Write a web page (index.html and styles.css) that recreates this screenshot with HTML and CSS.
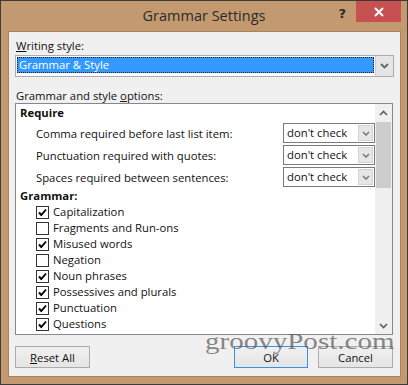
FILE: index.html
```html
<!DOCTYPE html>
<html lang="en">
<head>
  <meta charset="UTF-8" />
  <title>Grammar Settings</title>
  <link rel="stylesheet" href="styles.css">
</head>
<body>
  <div class="window">
    <div class="titlebar">
      <div></div>
      <div class="title">Grammar Settings</div>
      <div class="controls">
        <span class="help">?</span>
        <span class="close">
          <svg width="10" height="10" viewBox="0 0 10 10"><path d="M1 1L9 9M9 1L1 9" stroke="#fff" stroke-width="2"/></svg>
        </span>
      </div>
    </div>

    <div class="content">
      <div class="label label-style"><u>W</u>riting style:</div>
      <div class="select">
        <div class="select-value"><span>Grammar &amp; Style</span></div>
        <div class="select-btn">
          <svg width="9" height="6" viewBox="0 0 9 6"><path d="M1 1L4.5 4.5L8 1" fill="none" stroke="#666" stroke-width="1.8"/></svg>
        </div>
      </div>

      <div class="label label-options">Grammar and style <u>o</u>ptions:</div>
      <div class="listbox">
        <div class="items">
          <div class="group">Require</div>
          <div class="combo-row">
            <span>Comma required before last list item:</span>
            <div class="combo"><span class="combo-text">don't check</span><span class="combo-btn"><svg width="8" height="5" viewBox="0 0 8 5"><path d="M1 1L4 4L7 1" fill="none" stroke="#777" stroke-width="1.5"/></svg></span></div>
          </div>
          <div class="combo-row">
            <span>Punctuation required with quotes:</span>
            <div class="combo"><span class="combo-text">don't check</span><span class="combo-btn"><svg width="8" height="5" viewBox="0 0 8 5"><path d="M1 1L4 4L7 1" fill="none" stroke="#777" stroke-width="1.5"/></svg></span></div>
          </div>
          <div class="combo-row">
            <span>Spaces required between sentences:</span>
            <div class="combo"><span class="combo-text">don't check</span><span class="combo-btn"><svg width="8" height="5" viewBox="0 0 8 5"><path d="M1 1L4 4L7 1" fill="none" stroke="#777" stroke-width="1.5"/></svg></span></div>
          </div>
          <div class="group group-grammar">Grammar:</div>
          <div class="check-row"><span class="check on"></span>Capitalization</div>
          <div class="check-row"><span class="check"></span>Fragments and Run-ons</div>
          <div class="check-row"><span class="check on"></span>Misused words</div>
          <div class="check-row"><span class="check"></span>Negation</div>
          <div class="check-row"><span class="check on"></span>Noun phrases</div>
          <div class="check-row"><span class="check on"></span>Possessives and plurals</div>
          <div class="check-row"><span class="check on"></span>Punctuation</div>
          <div class="check-row"><span class="check on"></span>Questions</div>
          <div class="check-row"><span class="check on"></span></div>
        </div>
        <div class="scrollbar">
          <div class="scroll-arrow">
            <svg width="9" height="6" viewBox="0 0 9 6"><path d="M1 5L4.5 1.5L8 5" fill="none" stroke="#606060" stroke-width="1.6"/></svg>
          </div>
          <div class="scroll-track"><div class="scroll-thumb"></div></div>
          <div class="scroll-arrow">
            <svg width="9" height="6" viewBox="0 0 9 6"><path d="M1 1L4.5 4.5L8 1" fill="none" stroke="#606060" stroke-width="1.6"/></svg>
          </div>
        </div>
      </div>

      <div class="buttons">
        <button class="btn"><u>R</u>eset All</button>
        <div class="spacer"></div>
        <button class="btn btn-default">OK</button>
        <button class="btn">Cancel</button>
      </div>

      <div class="watermark">groovyPost.com</div>
    </div>
  </div>
</body>
</html>
```

FILE: styles.css
```css
body { margin: 0; background: #fff; font-family: "Open Sans", "Noto Sans", sans-serif; }

.window {
  position: relative;
  width: 408px;
  height: 385px;
  box-sizing: border-box;
  border: 1px solid #3b3b3b;
  background: #c39a6f;
  padding: 0 6px 7px 7px;
  display: flex;
  flex-direction: column;
}

.titlebar {
  height: 30px;
  display: grid;
  grid-template-columns: 73px 1fr 73px;
  margin: 0 -6px 0 -7px;
}

.title {
  text-align: center;
  font-size: 14.5px;
  line-height: 30px;
  color: #2b2b2b;
}

.controls {
  display: flex;
  justify-content: flex-end;
  align-items: flex-start;
  padding-right: 6px;
}

.help {
  font-family: "DejaVu Sans", sans-serif;
  font-weight: bold;
  font-size: 13px;
  color: #2a2a2a;
  line-height: 14px;
  margin-top: 6px;
  margin-right: 10px;
}

.close {
  width: 45px;
  height: 21px;
  background: #c75050;
  display: flex;
  align-items: center;
  justify-content: center;
}

.content {
  flex: 1;
  position: relative;
  background: #f0f0f0;
  border: 1px solid #a9835d;
  padding: 0 6px 0 6px;
  font-size: 11.3px;
  color: #111;
  overflow: hidden;
}

.label {
  height: 16px;
  line-height: 16px;
  padding-left: 1px;
}

.label-style { margin-top: 6px; }
.label-options { margin-top: 11px; }

.select {
  margin-top: 1px;
  width: 379px;
  height: 22px;
  box-sizing: border-box;
  border: 1px solid #acacac;
  background: #fff;
  display: flex;
}

.select-value {
  flex: 1;
  padding: 1px;
}

.select-value span {
  display: block;
  height: 16px;
  line-height: 16px;
  background: #3399ff;
  color: #fff;
  outline: 1px dotted #222;
  outline-offset: -1px;
  padding-left: 2px;
}

.select-btn {
  width: 17px;
  background: #e5e5e5;
  border-left: 1px solid #d0d0d0;
  display: flex;
  align-items: center;
  justify-content: center;
}

.listbox {
  margin-top: -1px;
  width: 378px;
  height: 232px;
  box-sizing: border-box;
  border: 1px solid #828790;
  background: #fff;
  display: flex;
}

.items {
  flex: 1;
  overflow: hidden;
}

.group {
  font-weight: bold;
  padding-left: 4px;
  height: 18px;
  line-height: 18px;
}

.group-grammar {
  height: 16px;
  line-height: 16px;
}

.combo-row {
  height: 22px;
  display: flex;
  align-items: center;
  justify-content: space-between;
  padding-left: 20px;
}

.combo {
  width: 92px;
  height: 20px;
  box-sizing: border-box;
  border: 1px solid #7a7a7a;
  display: flex;
}

.combo-text {
  flex: 1;
  line-height: 18px;
  padding-left: 3px;
}

.combo-btn {
  width: 15px;
  margin: 1px;
  background: #e6e6e6;
  border: 1px solid #d4d4d4;
  box-sizing: border-box;
  display: flex;
  align-items: center;
  justify-content: center;
}

.check-row {
  height: 16px;
  line-height: 16px;
  display: flex;
  align-items: center;
  padding-left: 20px;
}

.check {
  width: 13px;
  height: 13px;
  box-sizing: border-box;
  border: 1px solid #333;
  background: #fff;
  margin-right: 4px;
}

.check.on {
  background: #fff url("data:image/svg+xml,%3Csvg xmlns='http://www.w3.org/2000/svg' width='11' height='11' viewBox='0 0 11 11'%3E%3Cpath d='M2 5.5L4.3 8L9 2.5' fill='none' stroke='%23000' stroke-width='1.9'/%3E%3C/svg%3E") no-repeat center;
}

.scrollbar {
  width: 17px;
  background: #f0f0f0;
  display: flex;
  flex-direction: column;
}

.scroll-arrow {
  height: 17px;
  display: flex;
  align-items: center;
  justify-content: center;
}

.scroll-track {
  flex: 1;
  padding: 1px 1px 0 1px;
}

.scroll-thumb {
  height: 66px;
  background: #cdcdcd;
}

.buttons {
  margin-top: 11px;
  width: 378px;
  display: flex;
  gap: 10px;
}

.spacer { flex: 1; }

.btn {
  width: 75px;
  height: 22px;
  box-sizing: border-box;
  border: 1px solid #acacac;
  background: linear-gradient(#f0f0f0, #e5e5e5);
  font-family: inherit;
  font-size: 11.3px;
  color: #111;
  padding: 0;
}

.btn-default {
  width: 74px;
  border-color: #3c8fe6;
}

.watermark {
  position: absolute;
  left: 196px;
  top: 297px;
  font-family: "Liberation Serif", serif;
  font-size: 22.5px;
  color: rgba(90, 90, 90, 0.72);
  transform: scaleX(1.29);
  transform-origin: left top;
  pointer-events: none;
}
```
